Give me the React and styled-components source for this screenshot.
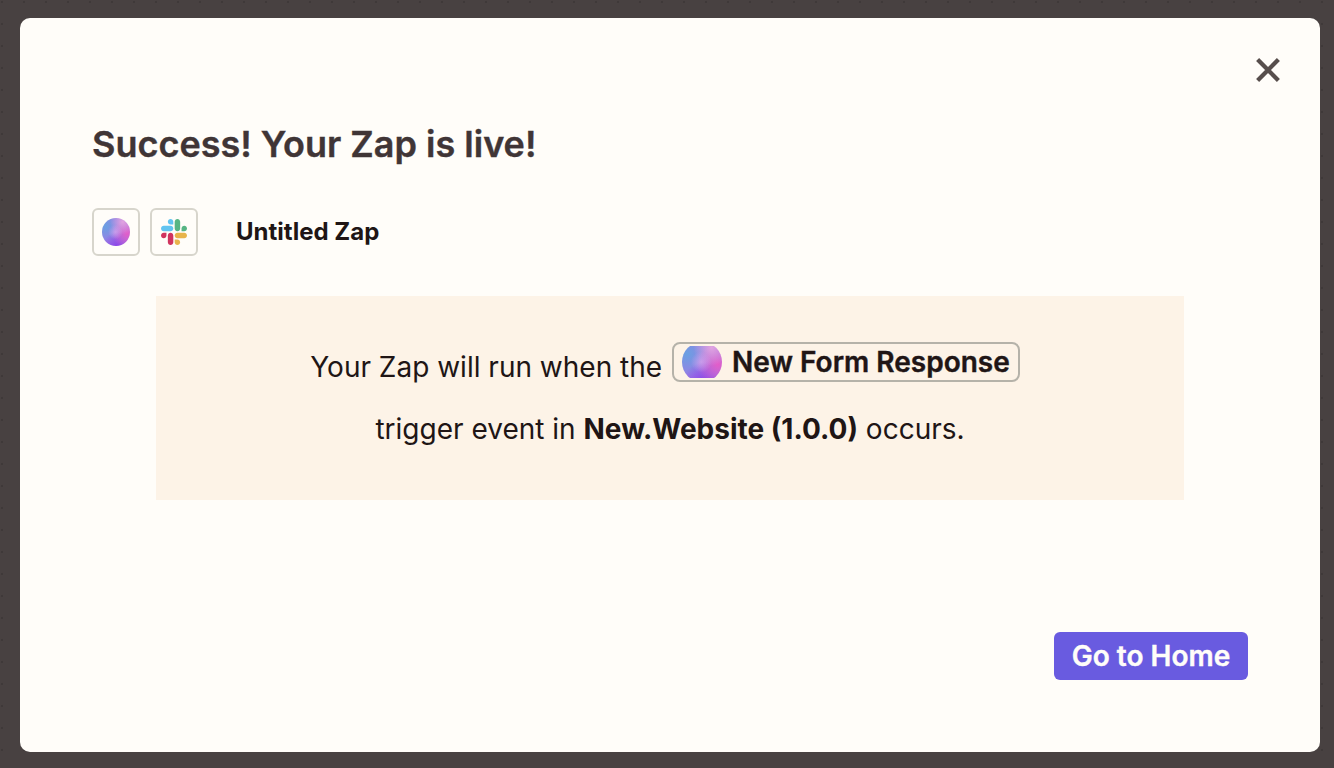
import React from "react";
import styled, { createGlobalStyle } from "styled-components";

const GlobalStyle = createGlobalStyle`
  * { box-sizing: border-box; }
  body { margin: 0; background: #484141; font-family: Inter, "Liberation Sans", sans-serif; color: #201515; }
`;
const Backdrop = styled.div`
  height: 768px;
  padding: 18px 14px 16px 20px;
  background: radial-gradient(circle at 2px 2px, #3f3939 1px, transparent 1.6px) 0 0 / 22px 22px #484141;
`;
const Dialog = styled.section`
  display: flex;
  flex-direction: column;
  height: 734px;
  padding: 36px 36px 72px 72px;
  border-radius: 10px;
  background: #fffdf9;
`;
const CloseButton = styled.button`
  align-self: flex-end;
  width: 32px;
  height: 32px;
  padding: 0;
  border: 0;
  background: none;
  svg { display: block; }
`;
const Title = styled.h1`
  margin: 34px 0 0;
  font-size: 36px;
  line-height: 48px;
  font-weight: 600;
  color: #403536;
  -webkit-text-stroke: 0.4px currentColor;
`;
const ZapRow = styled.div`
  display: flex;
  align-items: center;
  gap: 10px;
  margin-top: 40px;
`;
const AppIcon = styled.span`
  display: grid;
  place-items: center;
  width: 48px;
  height: 48px;
  border: 2px solid #d7d5cc;
  border-radius: 6px;
`;
const ZapName = styled.span`
  margin-left: 28px;
  padding-bottom: 2px;
  font-size: 24px;
  font-weight: 700;
`;
const OrbFrame = styled.span`
  display: flex;
  align-items: center;
  justify-content: center;
  width: ${(p) => p.$size}px;
  height: ${(p) => p.$height || p.$size}px;
  overflow: hidden;
`;
const OrbBall = styled.span`
  flex: none;
  width: ${(p) => p.$size}px;
  height: ${(p) => p.$size}px;
  border-radius: 50%;
  background:
    radial-gradient(circle at 48% 50%, rgba(218, 168, 240, 0.7), transparent 36%),
    radial-gradient(circle at 74% 14%, rgba(232, 168, 224, 0.9), transparent 40%),
    radial-gradient(circle at 90% 56%, #e35cc9, transparent 50%),
    radial-gradient(circle at 55% 104%, #8a3ee8, transparent 46%),
    radial-gradient(circle at 12% 30%, #6aa0e2, transparent 52%),
    #9a7ee4;
`;
const Notice = styled.div`
  display: flex;
  flex-direction: column;
  align-items: center;
  width: 1028px;
  height: 204px;
  margin: 40px 0 0 64px;
  padding-top: 46px;
  background: #fdf3e7;
  font-size: 28px;
`;
const Line = styled.div`
  display: flex;
  gap: 10px;
  padding-right: 10px;
  line-height: 50px;
`;
const EventTag = styled.span`
  display: flex;
  align-items: center;
  gap: 10px;
  height: 40px;
  padding: 0 8px;
  border: 2px solid #b5b2a9;
  border-radius: 8px;
  font-weight: 600;
  line-height: 36px;
  -webkit-text-stroke: 0.4px currentColor;
`;
const Sentence = styled.p`
  margin: 12px 0 0;
  line-height: 50px;
  b { font-weight: 700; }
`;
const HomeButton = styled.button`
  align-self: flex-end;
  width: 194px;
  height: 48px;
  margin: auto 36px 0 0;
  padding: 0;
  border: 0;
  border-radius: 6px;
  background: #695be0;
  color: #fffdf9;
  font: 600 28px/48px Inter, sans-serif;
  -webkit-text-stroke: 0.4px currentColor;
`;

function Orb({ size, height }) {
  return (
    <OrbFrame $size={size} $height={height}>
      <OrbBall $size={size} />
    </OrbFrame>
  );
}

function SlackLogo() {
  return (
    <svg width="26" height="26" viewBox="0 0 122.8 122.8" aria-label="Slack">
      <path fill="#d0345f" d="M25.8 77.6c0 7.1-5.8 12.9-12.9 12.9S0 84.7 0 77.6s5.8-12.9 12.9-12.9h12.9v12.9zm6.5 0c0-7.1 5.8-12.9 12.9-12.9s12.9 5.8 12.9 12.9v32.3c0 7.1-5.8 12.9-12.9 12.9s-12.9-5.8-12.9-12.9V77.6z" />
      <path fill="#62c4f0" d="M45.2 25.8c-7.1 0-12.9-5.8-12.9-12.9S38.1 0 45.2 0s12.9 5.8 12.9 12.9v12.9H45.2zm0 6.5c7.1 0 12.9 5.8 12.9 12.9s-5.8 12.9-12.9 12.9H12.9C5.8 58.1 0 52.3 0 45.2s5.8-12.9 12.9-12.9h32.3z" />
      <path fill="#56b584" d="M97 45.2c0-7.1 5.8-12.9 12.9-12.9s12.9 5.8 12.9 12.9-5.8 12.9-12.9 12.9H97V45.2zm-6.5 0c0 7.1-5.8 12.9-12.9 12.9s-12.9-5.8-12.9-12.9V12.9C64.7 5.8 70.5 0 77.6 0s12.9 5.8 12.9 12.9v32.3z" />
      <path fill="#e8b44b" d="M77.6 97c7.1 0 12.9 5.8 12.9 12.9s-5.8 12.9-12.9 12.9-12.9-5.8-12.9-12.9V97h12.9zm0-6.5c-7.1 0-12.9-5.8-12.9-12.9s5.8-12.9 12.9-12.9h32.3c7.1 0 12.9 5.8 12.9 12.9s-5.8 12.9-12.9 12.9H77.6z" />
    </svg>
  );
}

export default function App() {
  return (
    <Backdrop>
      <GlobalStyle />
      <Dialog>
        <CloseButton aria-label="Close">
          <svg width="32" height="32"><path d="M5.6 5.6 26.4 26.4M26.4 5.6 5.6 26.4" stroke="#574e4c" strokeWidth="4.3" /></svg>
        </CloseButton>
        <Title>Success! Your Zap is live!</Title>
        <ZapRow>
          <AppIcon><Orb size={28} /></AppIcon>
          <AppIcon><SlackLogo /></AppIcon>
          <ZapName>Untitled Zap</ZapName>
        </ZapRow>
        <Notice>
          <Line>Your Zap will run when the <EventTag><Orb size={40} height={32} />New Form Response</EventTag></Line>
          <Sentence>trigger event in <b>New.Website (1.0.0)</b> occurs.</Sentence>
        </Notice>
        <HomeButton>Go to Home</HomeButton>
      </Dialog>
    </Backdrop>
  );
}
